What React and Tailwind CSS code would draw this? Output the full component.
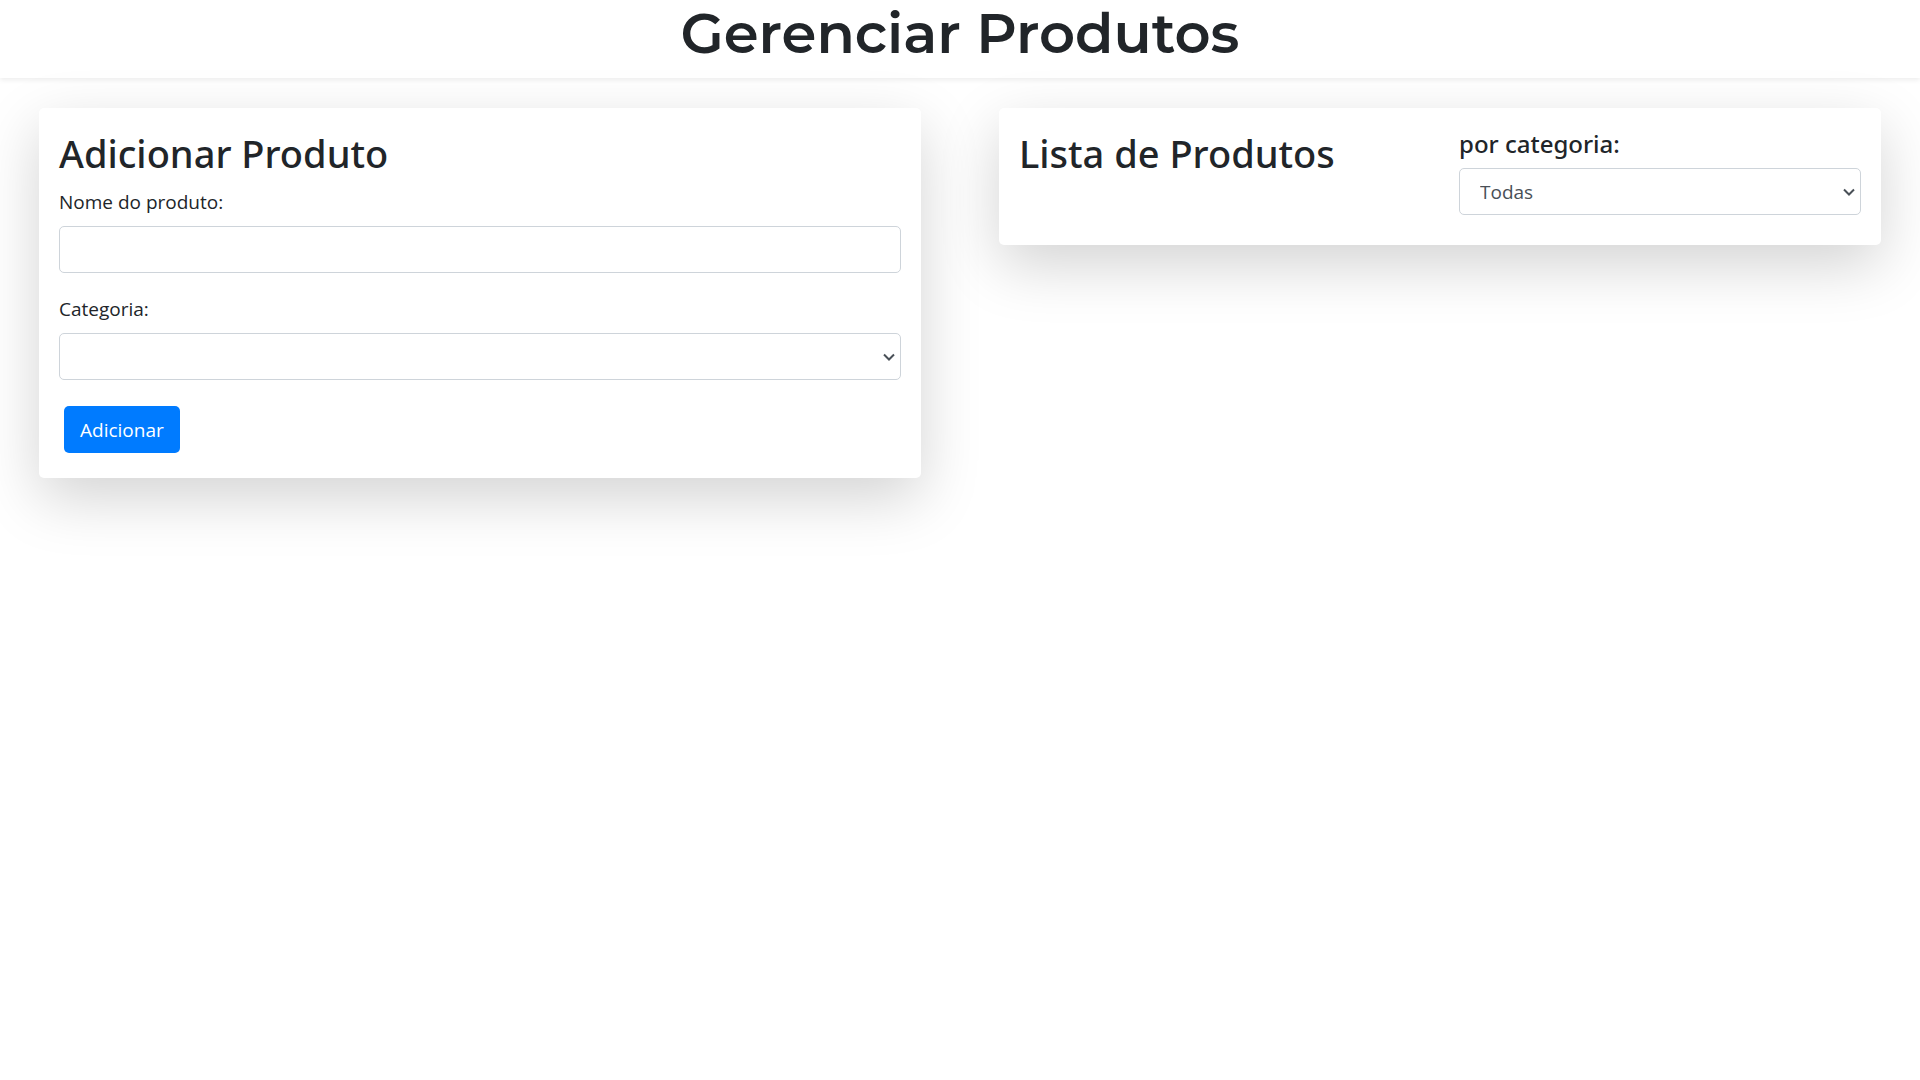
import React from "react";

const control =
  "block h-[47px] w-full rounded-[5px] border border-[#ced4da] bg-white px-5 text-[#495057] outline-none focus:border-[#80bdff]";

function Select({ id, children }) {
  return (
    <div className="relative">
      <select id={id} className={control + " appearance-none"}>
        {children}
      </select>
      <svg
        className="pointer-events-none absolute top-1/2 right-1.5 h-2 w-3 -translate-y-1/2"
        viewBox="0 0 12 8"
        fill="none"
        stroke="#495057"
        strokeWidth="2"
        aria-hidden="true"
      >
        <path d="M1 1.5 L6 6.5 L11 1.5" />
      </svg>
    </div>
  );
}

function Card({ children }) {
  return (
    <section className="rounded-[5px] bg-white p-5 shadow-[0_20px_60px_rgba(0,0,0,0.175)]">
      {children}
    </section>
  );
}

export default function App() {
  return (
    <div className="min-h-screen bg-white font-['Segoe_UI','Open_Sans',sans-serif] text-[19px] leading-[30px] text-[#212529]">
      <header className="pb-3 text-center shadow-[0_2px_5px_rgba(0,0,0,0.075)]">
        <h1 className="font-[Montserrat,Inter,sans-serif] text-[56px] leading-[66px] font-semibold">
          Gerenciar Produtos
        </h1>
      </header>

      <main className="grid grid-cols-2 items-start gap-[78px] px-[39px] pt-[30px]">
        <Card>
          <h2 className="mt-0.5 font-['Segoe_UI','Noto_Sans',sans-serif] text-[38px] leading-[46px] font-medium">
            Adicionar Produto
          </h2>
          <form onSubmit={(e) => e.preventDefault()}>
            <label htmlFor="nome" className="mt-[11px] block">
              Nome do produto:
            </label>
            <input id="nome" type="text" className={control + " mt-[9px]"} />
            <label htmlFor="categoria" className="mt-[21px] mb-[9px] block">
              Categoria:
            </label>
            <Select id="categoria">
              <option value=""></option>
            </Select>
            <button
              type="submit"
              className="mt-[26px] mb-[5px] ml-[5px] h-[47px] rounded-[5px] bg-[#007bff] px-4 text-white"
            >
              Adicionar
            </button>
          </form>
        </Card>

        <Card>
          <div className="grid grid-cols-2 gap-[38px]">
            <h2 className="mt-0.5 font-['Segoe_UI','Noto_Sans',sans-serif] text-[38px] leading-[46px] font-medium">
              Lista de Produtos
            </h2>
            <div className="mb-2.5">
              <label
                htmlFor="filtro"
                className="mb-2 block font-['Segoe_UI','Noto_Sans',sans-serif] text-2xl leading-[32px] font-medium"
              >
                por categoria:
              </label>
              <Select id="filtro">
                <option>Todas</option>
              </Select>
            </div>
          </div>
        </Card>
      </main>
    </div>
  );
}
